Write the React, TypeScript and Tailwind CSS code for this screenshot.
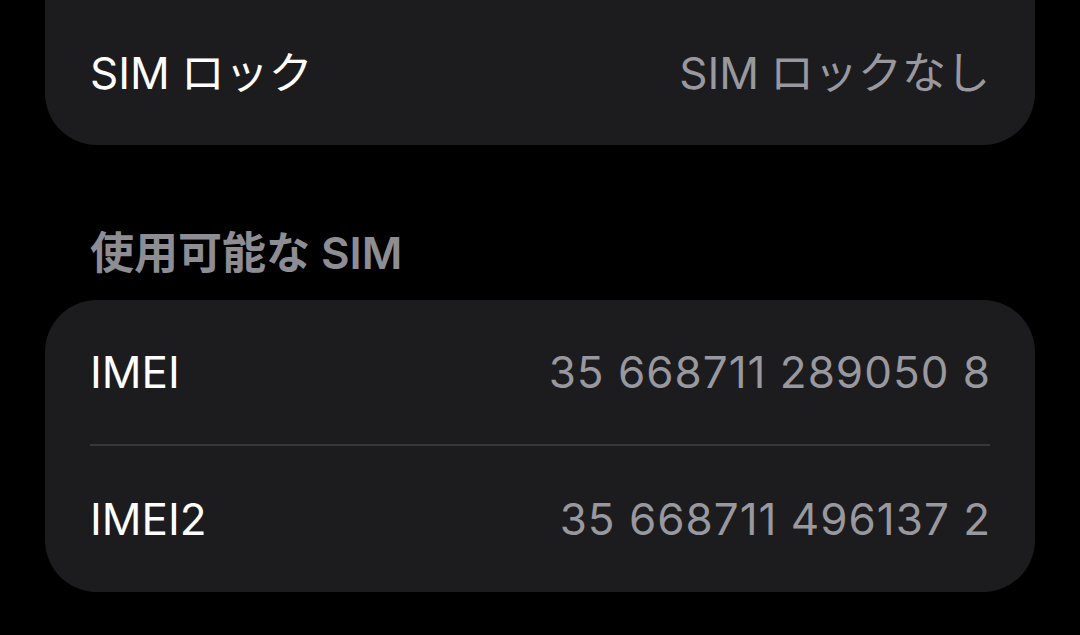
import React from 'react';

const FONT = "font-['Inter','Noto_Sans_CJK_JP',sans-serif]";

interface RowProps {
  label: React.ReactNode;
  value: React.ReactNode;
  height?: string;
  numeric?: boolean;
}

// iOS puts a little air between Latin and kana; mimic it with a spacer
const Gap: React.FC = () => <span className="inline-block w-[11px]" />;

const Row: React.FC<RowProps> = ({ label, value, height = 'h-[146px]', numeric }) => (
  <div className={`flex ${height} items-center justify-between`}>
    <span className="text-[44px] leading-none text-white">{label}</span>
    <span
      className={`text-[44px] leading-none text-[#98989e] ${numeric ? 'tracking-[1px] -mr-[1px]' : ''}`}
    >
      {value}
    </span>
  </div>
);

const App: React.FC = () => {
  return (
    <div className={`h-screen w-full overflow-hidden bg-black px-[45px] ${FONT}`}>
      {/* Carrier card (scrolled partly off the top) */}
      <div className="-mt-[80px] rounded-[52px] bg-[#1c1c1e] px-[45px] pt-[80px]">
        <Row
          height="h-[145px]"
          label={<>SIM<Gap />ロック</>}
          value={<>SIM<Gap />ロックなし</>}
        />
      </div>

      {/* Section header */}
      <div className="mt-[83px] mb-[22px] flex h-[50px] items-center px-[45px]">
        <span className="text-[44px] leading-none font-semibold text-[#8d8d93]">
          使用可能な<Gap />SIM
        </span>
      </div>

      {/* IMEI card */}
      <div className="rounded-[52px] bg-[#1c1c1e] px-[45px]">
        <Row height="h-[144px]" label="IMEI" value="35 668711 289050 8" numeric />
        <div className="h-[2px] bg-[#38383a]" />
        <Row label="IMEI2" value="35 668711 496137 2" numeric />
      </div>
    </div>
  );
};

export default App;
